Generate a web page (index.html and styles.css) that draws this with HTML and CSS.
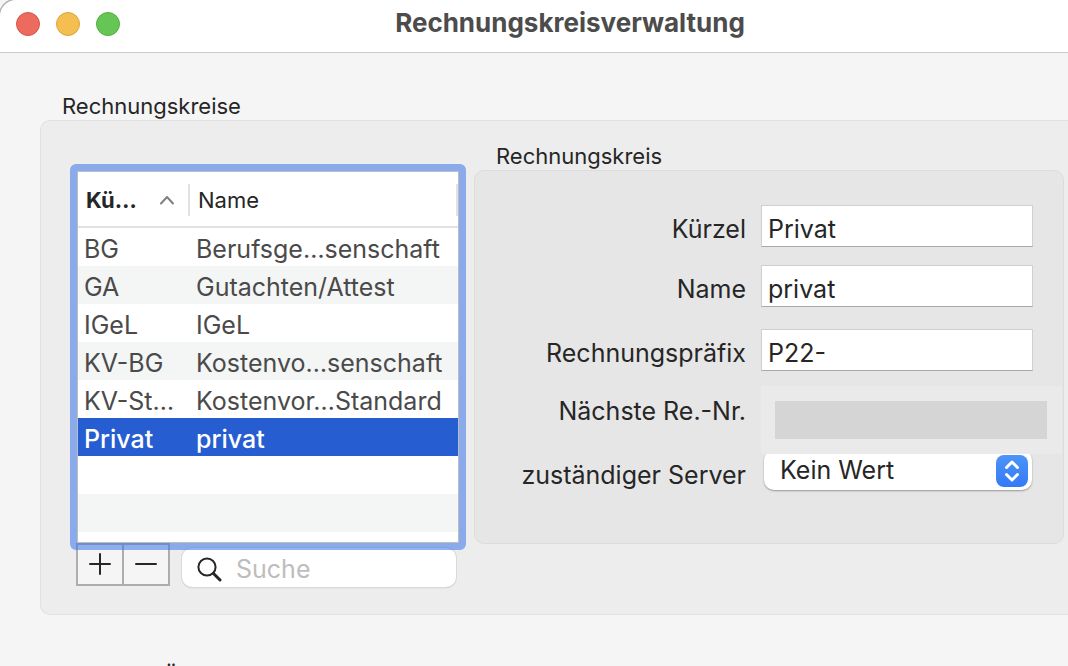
FILE: index.html
```
<!DOCTYPE html>
<html lang="de">
<head>
<meta charset="utf-8">
<title>Rechnungskreisverwaltung</title>
<link rel="stylesheet" href="styles.css">
</head>
<body>
<div class="window">
  <header class="titlebar">
    <div class="lights">
      <button class="light light-close" aria-label="Schließen"></button>
      <button class="light light-min" aria-label="Minimieren"></button>
      <button class="light light-zoom" aria-label="Zoomen"></button>
    </div>
    <h1 class="title">Rechnungskreisverwaltung</h1>
  </header>
  <main class="content">
    <h2 class="group-label">Rechnungskreise</h2>
    <section class="group">
      <div class="list-column">
        <div class="list">
          <table class="table">
            <thead>
              <tr>
                <th class="col-code sorted" aria-sort="ascending"><div class="head"><span>Kü…</span><svg class="sort" viewBox="0 0 16 10" aria-hidden="true"><path d="M2 8.500 L8 2 L14 8.500"/></svg></div></th>
                <th><div class="head">Name</div></th>
              </tr>
            </thead>
            <tbody>
              <tr><td>BG</td><td>Berufsge…senschaft</td></tr>
              <tr><td>GA</td><td>Gutachten/Attest</td></tr>
              <tr><td>IGeL</td><td>IGeL</td></tr>
              <tr><td>KV-BG</td><td>Kostenvo…senschaft</td></tr>
              <tr><td>KV-St…</td><td>Kostenvor…Standard</td></tr>
              <tr class="selected"><td>Privat</td><td>privat</td></tr>
              <tr><td></td><td></td></tr>
              <tr><td></td><td></td></tr>
            </tbody>
          </table>
        </div>
        <div class="list-tools">
          <div class="segmented">
            <button class="segment" aria-label="Hinzufügen"><svg viewBox="0 0 22 22" aria-hidden="true"><path d="M1 11H21M11 1V21"/></svg></button>
            <button class="segment" aria-label="Entfernen"><svg viewBox="0 0 22 22" aria-hidden="true"><path d="M1 11H21"/></svg></button>
          </div>
          <label class="search">
            <svg viewBox="0 0 26 26" aria-hidden="true"><circle cx="11" cy="11" r="8.600"/><path class="handle" d="M17.500 17.500L24 24"/></svg>
            <input type="search" placeholder="Suche" aria-label="Suche">
          </label>
        </div>
      </div>
      <div class="detail-column">
        <h3 class="group-label">Rechnungskreis</h3>
        <form class="detail">
          <div class="row">
            <label for="code">Kürzel</label>
            <input class="field" id="code" type="text" value="Privat">
          </div>
          <div class="row">
            <label for="name">Name</label>
            <input class="field" id="name" type="text" value="privat">
          </div>
          <div class="row row-prefix">
            <label for="prefix">Rechnungspräfix</label>
            <input class="field" id="prefix" type="text" value="P22-">
          </div>
          <div class="row row-next">
            <label for="next">Nächste Re.-Nr.</label>
            <div class="masked"><output id="next"></output></div>
          </div>
          <div class="row row-server">
            <label for="server">zuständiger Server</label>
            <div class="popup">
              <select id="server"><option>Kein Wert</option></select>
              <svg viewBox="0 0 32 32" aria-hidden="true"><path d="M10.500 12.500L16 7L21.500 12.500M10.500 19.500L16 25L21.500 19.500"/></svg>
            </div>
          </div>
        </form>
      </div>
    </section>
    <h2 class="group-label next-label">Ü</h2>
  </main>
</div>
</body>
</html>
```
FILE: styles.css
```
* { box-sizing: border-box; }

body {
  margin: 0;
  height: 100vh;
  overflow: hidden;
  background: #f5f5f5;
  color: #262626;
  font-family: Inter, "Liberation Sans", sans-serif;
  font-size: 25px;
}

h1, h2, h3 { margin: 0; }
button, input, select { font: inherit; color: inherit; }

.titlebar {
  display: flex;
  align-items: center;
  height: 53px;
  padding: 0 16px 4px;
  background: #fff;
  border-bottom: 1px solid #cbcbcb;
  border-top-left-radius: 16px;
  box-shadow: -1px -1px 0 #b0b0b0;
}

.lights { display: flex; gap: 16px; width: 104px; }
.light {
  width: 24px;
  height: 24px;
  padding: 0;
  border: 1px solid;
  border-radius: 50%;
}
.light-close { background: #ec6a5e; border-color: #d5564b; }
.light-min { background: #f4bf50; border-color: #dba53d; }
.light-zoom { background: #66c655; border-color: #53ae43; }

.title {
  flex: 1;
  padding: 0 32px 2px 0;
  text-align: center;
  font-size: 26px;
  font-weight: 700;
  line-height: 32px;
  color: #4c4c4c;
}

.content { padding: 39px 0 0 40px; }

.group-label {
  padding-left: 22px;
  font-size: 22px;
  font-weight: 400;
  line-height: 28px;
}

.group {
  display: flex;
  gap: 15px;
  padding: 21px 4px 27px 35px;
  border: 1px solid #e1e1e1;
  border-right: 0;
  border-radius: 10px 0 0 10px;
  background: #ededed;
}

.list-column { flex: none; width: 383px; padding-top: 29px; }

.list {
  position: relative;
  z-index: 1;
  height: 372px;
  margin-left: 1px;
  border: 1px solid #bdbdbd;
  background: #fff;
}
/* Keyboard focus ring, drawn over the neighbouring controls */
.list::after {
  content: "";
  position: absolute;
  inset: -8px;
  border: 7px solid rgba(61, 118, 233, .56);
  border-radius: 6px;
  pointer-events: none;
}

.table {
  width: 100%;
  border-collapse: separate;
  border-spacing: 0;
  table-layout: fixed;
  color: #4a4a4a;
}
.table th {
  height: 56px;
  padding: 2px 0 0;
  border-bottom: 2px solid #e2e2e2;
  text-align: left;
  font-size: 22px;
  font-weight: 400;
  color: #262626;
}
.table .sorted { font-weight: 700; }
.col-code { width: 112px; }
.head {
  display: flex;
  align-items: center;
  justify-content: space-between;
  height: 32px;
  padding: 0 13px 0 8px;
  border-right: 2px solid #e2e2e2;
}
.sort { width: 16px; height: 10px; fill: none; stroke: #808080; stroke-width: 2; stroke-linecap: round; stroke-linejoin: round; }
.table td {
  height: 38px;
  padding: 4px 0 0 6px;
  line-height: 34px;
  white-space: nowrap;
}
.table tbody tr:nth-child(even) { background: #f4f5f5; }
.table tbody tr.selected { background: #265dd0; color: #fff; font-weight: 500; }

.list-tools { display: flex; gap: 12px; padding-right: 3px; }

.segmented { display: flex; flex: none; height: 43px; border: 2px solid #adadad; background: #f5f5f5; }
.segment {
  display: grid;
  place-items: center;
  width: 44px;
  padding: 0 0 2px;
  border: 0;
  background: none;
}
.segment + .segment { width: 46px; border-left: 2px solid #adadad; }
.segment svg { width: 22px; height: 22px; fill: none; stroke: #262626; stroke-width: 2; stroke-linecap: round; }

.search {
  display: flex;
  flex: 1;
  align-items: center;
  gap: 14px;
  min-width: 0;
  height: 39px;
  margin-top: 5px;
  padding: 2px 14px 0;
  border-radius: 10px;
  background: #fff;
  box-shadow: 0 0 0 1px #dadada, 0 1px 1px #a0a0a0;
}
.search svg { flex: none; width: 26px; height: 26px; fill: none; stroke: #262626; stroke-width: 2; stroke-linecap: round; }
.search .handle { stroke-width: 3; }
.search input {
  flex: 1;
  min-width: 0;
  padding: 0;
  border: 0;
  outline: 0;
  background: none;
}
.search input::placeholder { color: #bdbdbd; }

.detail-column { flex: 1; min-width: 0; }

.detail {
  height: 374px;
  padding-top: 34px;
  border: 1px solid #dcdcdc;
  border-radius: 10px;
  background: #e6e6e6;
}

.row {
  display: grid;
  grid-template-columns: 271px 1fr;
  column-gap: 15px;
  align-items: start;
  margin-bottom: 12px;
  padding-right: 30px;
}
.row label { text-align: right; line-height: 48px; white-space: nowrap; }
.row-prefix { margin: 16px 0 9px; }
.row-next { margin-bottom: -4px; padding-right: 1px; }
.row-next label, .row-server label { line-height: 50px; }

.field {
  width: 100%;
  height: 42px;
  padding: 5px 6px 0;
  border: 1px solid #d0d0d0;
  border-bottom: 1px solid #a8a8a8;
  border-radius: 0;
  outline: 0;
  background: #fff;
}

.masked {
  position: relative;
  z-index: 1;
  padding: 15px 15px 15px 14px;
  background: #eaeaea;
}
.masked output { display: block; height: 38px; background: #d5d5d5; }

.popup { position: relative; margin: 0 1px 0 3px; }
.popup select {
  display: block;
  width: 100%;
  height: 40px;
  padding: 0 40px 0 16px;
  border: 0;
  border-radius: 10px;
  outline: 0;
  appearance: none;
  background: #fff;
  box-shadow: 0 1px 2px rgba(0, 0, 0, .35);
}
.popup svg {
  position: absolute;
  top: 5px;
  right: 4px;
  width: 32px;
  height: 32px;
  border-radius: 8px;
  background: linear-gradient(#4d94f8, #3579f6);
  fill: none;
  stroke: #fff;
  stroke-width: 3;
  stroke-linecap: round;
  stroke-linejoin: round;
  pointer-events: none;
}

.next-label { padding: 47px 0 0 123px; }
```
